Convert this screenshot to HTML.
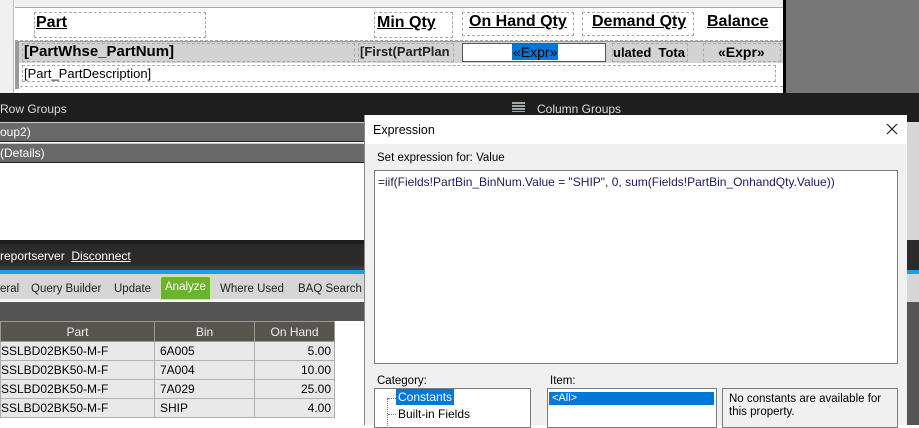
<!DOCTYPE html>
<html><head><meta charset="utf-8"><style>
*{margin:0;padding:0;box-sizing:border-box}
body{width:919px;height:425px;overflow:hidden;position:relative;background:#fff;font-family:"Liberation Sans",sans-serif}
.a{position:absolute}
.seg{font-family:"Liberation Sans",sans-serif}
.dash{border:1px dashed #a8a8a8}
.h{font-weight:bold;font-size:16px;text-decoration:underline;color:#000}
</style></head><body>
<div class="a" style="left:0;top:0;width:919px;height:93px;background:#777"></div>
<div class="a" style="left:0;top:0;width:783px;height:93px;background:#fff"></div>
<div class="a" style="left:0;top:0;width:14px;height:93px;background:#f0f0f0;border-right:1px solid #bbb"></div>
<div class="a" style="left:15px;top:0;width:768px;height:8px;background:#f0f0f0;border-bottom:1px solid #aaa"></div>
<div class="a" style="left:783px;top:0;width:3px;height:93px;background:#000"></div>
<div class="a" style="left:15px;top:9px;width:768px;height:32px;border-bottom:1px dashed #aaa"></div>
<div class="a dash" style="left:34px;top:12px;width:172px;height:26px"></div>
<div class="a h" style="left:36px;top:14px">Part</div>
<div class="a dash" style="left:374px;top:12px;width:79px;height:26px"></div>
<div class="a h" style="left:377px;top:14px">Min Qty</div>
<div class="a dash" style="left:462px;top:12px;width:112px;height:24px"></div>
<div class="a h" style="left:469px;top:13px">On Hand Qty</div>
<div class="a dash" style="left:582px;top:12px;width:112px;height:24px"></div>
<div class="a h" style="left:592px;top:13px">Demand Qty</div>
<div class="a h" style="left:707px;top:13px">Balance</div>
<div class="a" style="left:17px;top:41px;width:766px;height:22px;background:#d3d3d3;border-top:1px solid #999"></div>
<div class="a" style="left:15px;top:41px;width:4px;height:48px;background:#999"></div>
<div class="a dash" style="left:22px;top:43px;width:333px;height:19px"></div>
<div class="a" style="left:24px;top:43px;font-weight:bold;font-size:15px">[PartWhse_PartNum]</div>
<div class="a dash" style="left:358px;top:43px;width:96px;height:19px"></div>
<div class="a" style="left:360px;top:44px;font-weight:bold;font-size:13px;color:#222">[First(PartPlan</div>
<div class="a" style="left:462px;top:43px;width:144px;height:19px;background:#fff;border:1px solid #555"></div>
<div class="a" style="left:512px;top:44px;font-size:14px;background:#0078d7;color:#000;padding:0 1px">«Expr»</div>
<div class="a dash" style="left:612px;top:43px;width:76px;height:19px"></div>
<div class="a" style="left:613px;top:45px;font-weight:bold;font-size:13px">ulated&nbsp; Tota</div>
<div class="a dash" style="left:703px;top:43px;width:78px;height:19px"></div>
<div class="a" style="left:718px;top:44px;font-weight:bold;font-size:14px">«Expr»</div>
<div class="a dash" style="left:22px;top:65px;width:754px;height:17px"></div>
<div class="a" style="left:24px;top:66px;font-size:13px">[Part_PartDescription]</div>
<div class="a" style="left:15px;top:86px;width:768px;height:0;border-top:1px dashed #aaa"></div>
<div class="a" style="left:0;top:93px;width:919px;height:29px;background:#1e1e1e"></div>
<div class="a seg" style="left:0;top:102px;font-size:12px;color:#ddd">Row Groups</div>
<div class="a" style="left:512px;top:102px;width:13px;height:10px;background:repeating-linear-gradient(#9aa 0 2px,#1e1e1e 2px 3px)"></div>
<div class="a seg" style="left:537px;top:102px;font-size:12px;color:#ddd">Column Groups</div>
<div class="a" style="left:0;top:122px;width:919px;height:20px;background:#696969;border-top:1px solid #ccc;border-bottom:1px solid #222"></div>
<div class="a seg" style="left:0;top:125px;font-size:12px;color:#fff">oup2)</div>
<div class="a" style="left:0;top:143px;width:919px;height:20px;background:#696969;border-top:1px solid #ccc;border-bottom:1px solid #222"></div>
<div class="a seg" style="left:0;top:146px;font-size:12px;color:#fff">(Details)</div>
<div class="a" style="left:0;top:240px;width:919px;height:30px;background:#2b2b2b;border-top:4px solid #1e1e1e;border-bottom:4px solid #3a3a3a"></div>
<div class="a seg" style="left:0;top:249px;font-size:12px;color:#fff">reportserver&nbsp; <u>Disconnect</u></div>
<div class="a" style="left:0;top:270px;width:919px;height:4px;background:#1ba1e2"></div>
<div class="a" style="left:0;top:274px;width:919px;height:27px;background:#d6d6d6;border-bottom:2px solid #f4f4f4"></div>
<div class="a" style="left:0;top:283px;font-size:11.5px;color:#222">eral</div>
<div class="a" style="left:31px;top:283px;font-size:11.5px;color:#222">Query Builder</div>
<div class="a" style="left:114px;top:283px;font-size:11.5px;color:#222">Update</div>
<div class="a" style="left:160px;top:276px;width:51px;height:24px;background:#6ab42a;border:1px solid #c8e8a8;border-radius:3px 3px 0 0"></div>
<div class="a" style="left:165px;top:281px;font-size:11.5px;color:#fff">Analyze</div>
<div class="a" style="left:220px;top:283px;font-size:11.5px;color:#222">Where Used</div>
<div class="a" style="left:298px;top:283px;font-size:11.5px;color:#222">BAQ Search</div>
<div class="a" style="left:0;top:302px;width:919px;height:19px;background:#555"></div>
<table class="a" style="left:0;top:321px;border-collapse:collapse;font-size:12px;width:335px">
<tr style="background:#58554f;color:#eee;height:20px"><td style="width:154px;text-align:center;border:1px solid #999">Part</td><td style="width:100px;text-align:center;border:1px solid #999">Bin</td><td style="text-align:center;border:1px solid #999">On Hand</td></tr>
<tr style="background:#e8e8e8;height:19px"><td style="border:1px solid #b0b0b0">SSLBD02BK50-M-F</td><td style="border:1px solid #b0b0b0;padding-left:5px">6A005</td><td style="border:1px solid #b0b0b0;text-align:right;padding-right:3px">5.00</td></tr>
<tr style="background:#e8e8e8;height:19px"><td style="border:1px solid #b0b0b0">SSLBD02BK50-M-F</td><td style="border:1px solid #b0b0b0;padding-left:5px">7A004</td><td style="border:1px solid #b0b0b0;text-align:right;padding-right:3px">10.00</td></tr>
<tr style="background:#e8e8e8;height:19px"><td style="border:1px solid #b0b0b0">SSLBD02BK50-M-F</td><td style="border:1px solid #b0b0b0;padding-left:5px">7A029</td><td style="border:1px solid #b0b0b0;text-align:right;padding-right:3px">25.00</td></tr>
<tr style="background:#e8e8e8;height:19px"><td style="border:1px solid #b0b0b0">SSLBD02BK50-M-F</td><td style="border:1px solid #b0b0b0;padding-left:5px">SHIP</td><td style="border:1px solid #b0b0b0;text-align:right;padding-right:3px">4.00</td></tr>
</table>
<div class="a" style="left:364px;top:115px;width:543px;height:310px;background:#f0f0f0;border-left:1px solid #888"></div>
<div class="a" style="left:365px;top:115px;width:542px;height:29px;background:#fff"></div>
<div class="a seg" style="left:373px;top:123px;font-size:12.5px">Expression</div>
<svg class="a" style="left:886px;top:123px" width="12" height="12"><path d="M1 1L11 11M11 1L1 11" stroke="#222" stroke-width="1.2"/></svg>
<div class="a seg" style="left:377px;top:152px;font-size:11.5px">Set expression for: Value</div>
<div class="a" style="left:374px;top:170px;width:524px;height:194px;background:#fff;border:1px solid #7a7a7a"></div>
<div class="a seg" style="left:378px;top:175px;font-size:12px;color:#1a1a60">=iif(Fields!PartBin_BinNum.Value = "SHIP", 0, sum(Fields!PartBin_OnhandQty.Value))</div>
<div class="a seg" style="left:377px;top:375px;font-size:11.5px">Category:</div>
<div class="a" style="left:374px;top:388px;width:157px;height:40px;background:#fff;border:1px solid #7a7a7a"></div>
<div class="a" style="left:387px;top:398px;width:1px;height:30px;border-left:1px dotted #777"></div>
<div class="a" style="left:388px;top:398px;width:8px;border-top:1px dotted #777"></div>
<div class="a" style="left:388px;top:414px;width:8px;border-top:1px dotted #777"></div>
<div class="a seg" style="left:396px;top:389px;font-size:12px;background:#0078d7;color:#fff;padding:1px 2px">Constants</div>
<div class="a seg" style="left:398px;top:407px;font-size:12px">Built-in Fields</div>
<div class="a seg" style="left:550px;top:375px;font-size:11.5px">Item:</div>
<div class="a" style="left:547px;top:388px;width:170px;height:40px;background:#fff;border:1px solid #7a7a7a"></div>
<div class="a seg" style="left:549px;top:392px;width:165px;height:13px;font-size:11px;line-height:13px;background:#0078d7;color:#fff;padding-left:3px">&lt;All&gt;</div>
<div class="a" style="left:722px;top:388px;width:176px;height:40px;background:#f0f0f0;border:1px solid #7a7a7a"></div>
<div class="a seg" style="left:729px;top:393px;font-size:11.5px;line-height:13px">No constants are available for<br>this property.</div>
<div class="a" style="left:907px;top:122px;width:12px;height:303px;background:#d6d6d6"></div>
<div class="a" style="left:907px;top:240px;width:12px;height:30px;background:#2b2b2b"></div>
<div class="a" style="left:907px;top:270px;width:12px;height:4px;background:#1ba1e2"></div>
<div class="a" style="left:907px;top:302px;width:12px;height:123px;background:#555"></div>
</body></html>
